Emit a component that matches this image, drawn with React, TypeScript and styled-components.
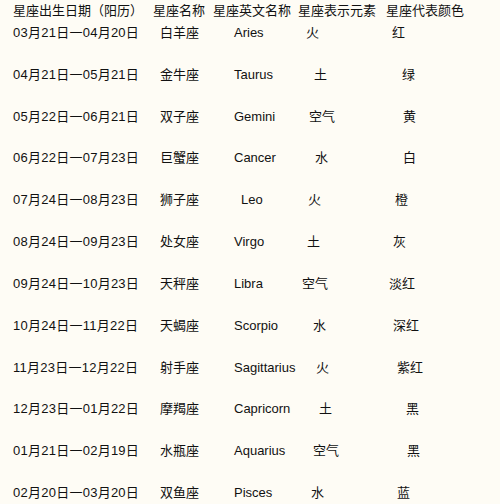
import React from "react";
import styled, { createGlobalStyle } from "styled-components";

const Global = createGlobalStyle`
  html, body {
    margin: 0;
    padding: 0;
    background: #fefcf5;
  }
  body {
    font-family: "Liberation Sans", "Noto Sans CJK SC", sans-serif;
    color: #111;
  }
`;

const Page = styled.div`
  width: 500px;
  height: 504px;
  overflow: hidden;
  background: #fefcf5;
  padding-left: 13px;
  box-sizing: border-box;
  display: flex;
  flex-direction: column;
`;

const Row = styled.div<{ $height: number; $header?: boolean }>`
  display: grid;
  grid-template-columns: 140px 60px 85px 88px 1fr;
  flex: none;
  height: ${(p) => p.$height}px;
  line-height: ${(p) => (p.$header ? 22 : 20)}px;
  padding-top: ${(p) => (p.$header ? 0 : 1)}px;
  box-sizing: border-box;
  align-items: start;
  font-size: 13px;
  white-space: nowrap;
`;

const Cell = styled.div<{ $indent?: number; $wide?: boolean }>`
  padding-left: ${(p) => p.$indent ?? 0}px;
  letter-spacing: ${(p) => (p.$wide ? "0.25px" : "normal")};
`;

const rows: Array<{
  date: string;
  name: string;
  en: string;
  enIndent: number;
  el: string;
  elIndent: number;
  color: string;
  colorIndent: number;
}> = [
  { date: "03月21日一04月20日", name: "白羊座", en: "Aries", enIndent: 21, el: "火", elIndent: 8, color: "红", colorIndent: 6 },
  { date: "04月21日一05月21日", name: "金牛座", en: "Taurus", enIndent: 21, el: "土", elIndent: 16, color: "绿", colorIndent: 16 },
  { date: "05月22日一06月21日", name: "双子座", en: "Gemini", enIndent: 21, el: "空气", elIndent: 11, color: "黄", colorIndent: 17 },
  { date: "06月22日一07月23日", name: "巨蟹座", en: "Cancer", enIndent: 21, el: "水", elIndent: 17, color: "白", colorIndent: 17 },
  { date: "07月24日一08月23日", name: "狮子座", en: "Leo", enIndent: 28, el: "火", elIndent: 10, color: "橙", colorIndent: 9 },
  { date: "08月24日一09月23日", name: "处女座", en: "Virgo", enIndent: 21, el: "土", elIndent: 9, color: "灰", colorIndent: 7 },
  { date: "09月24日一10月23日", name: "天秤座", en: "Libra", enIndent: 21, el: "空气", elIndent: 4, color: "淡红", colorIndent: 3 },
  { date: "10月24日一11月22日", name: "天蝎座", en: "Scorpio", enIndent: 21, el: "水", elIndent: 15, color: "深红", colorIndent: 7 },
  { date: "11月23日一12月22日", name: "射手座", en: "Sagittarius", enIndent: 21, el: "火", elIndent: 18, color: "紫红", colorIndent: 11 },
  { date: "12月23日一01月22日", name: "摩羯座", en: "Capricorn", enIndent: 21, el: "土", elIndent: 21, color: "黑", colorIndent: 20 },
  { date: "01月21日一02月19日", name: "水瓶座", en: "Aquarius", enIndent: 21, el: "空气", elIndent: 15, color: "黑", colorIndent: 21 },
  { date: "02月20日一03月20日", name: "双鱼座", en: "Pisces", enIndent: 21, el: "水", elIndent: 13, color: "蓝", colorIndent: 11 },
];

export default function App() {
  return (
    <>
      <Global />
      <Page>
        <Row $height={22} $header>
          <Cell>星座出生日期（阳历）</Cell>
          <Cell>星座名称</Cell>
          <Cell>星座英文名称</Cell>
          <Cell>星座表示元素</Cell>
          <Cell>星座代表颜色</Cell>
        </Row>
        {rows.map((r) => (
          <Row key={r.date} $height={41.82}>
            <Cell $wide>{r.date}</Cell>
            <Cell $indent={7}>{r.name}</Cell>
            <Cell $indent={r.enIndent}>{r.en}</Cell>
            <Cell $indent={r.elIndent}>{r.el}</Cell>
            <Cell $indent={r.colorIndent}>{r.color}</Cell>
          </Row>
        ))}
      </Page>
    </>
  );
}
